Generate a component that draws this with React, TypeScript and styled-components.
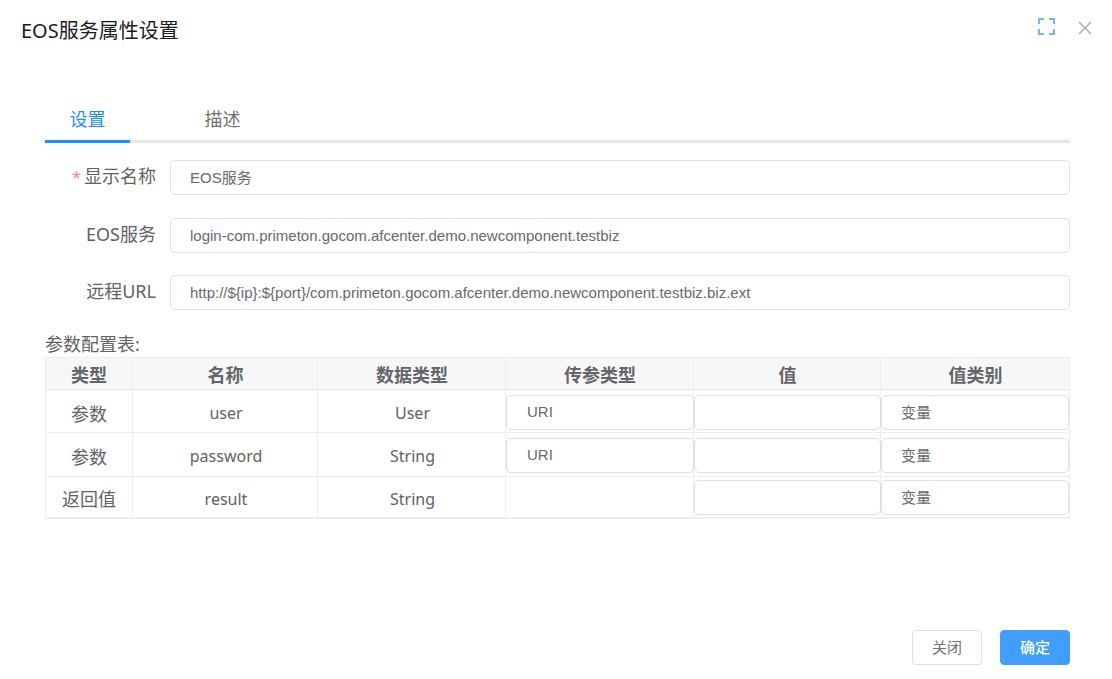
import React from "react";
import styled, { createGlobalStyle } from "styled-components";

const FONT = `"Noto Sans", "Noto Sans CJK SC", "Liberation Sans", sans-serif`;
const INPUT_FONT = `"Liberation Sans", "Noto Sans CJK SC", sans-serif`;

const Global = createGlobalStyle`
  html, body { margin: 0; padding: 0; background: #fff; }
  * { box-sizing: border-box; }
`;

const Dialog = styled.div`
  width: 1112px;
  height: 679px;
  background: #fff;
  font-family: ${FONT};
  display: flex;
  flex-direction: column;
  overflow: hidden;
`;
const Header = styled.header`
  height: 100px;
  display: flex;
  justify-content: space-between;
  align-items: flex-start;
  padding: 17px 20px 0 21px;
`;
const Title = styled.h1`
  margin: 0;
  font-size: 20px;
  line-height: 28px;
  font-weight: 400;
  color: #1b1b1b;
`;
const HeaderActions = styled.div`
  display: flex;
  align-items: flex-start;
  gap: 23px;
  margin-top: 1px;
`;
const Body = styled.main`
  flex: 1;
  padding: 0 42px 0 45px;
  display: flex;
  flex-direction: column;
`;
const TabBar = styled.div`
  display: flex;
  gap: 50px;
  height: 43px;
  border-bottom: 3px solid #e4e7ed;
`;
const Tab = styled.div<{ $active?: boolean }>`
  width: 85px;
  height: 43px;
  text-align: center;
  font-size: 18px;
  line-height: 38px;
  color: ${(p) => (p.$active ? "#1890ff" : "#707070")};
  border-bottom: 3px solid ${(p) => (p.$active ? "#1890ff" : "transparent")};
`;
const Form = styled.div`
  display: flex;
  flex-direction: column;
  margin-top: 17px;
`;
const FormRow = styled.div<{ $gap: number }>`
  display: flex;
  align-items: flex-start;
  height: 35px;
  margin-bottom: ${(p) => p.$gap}px;
`;
const Label = styled.label`
  width: 111px;
  text-align: right;
  font-size: 18px;
  line-height: 32px;
  color: #606266;
  flex: none;
`;
const Star = styled.span`
  color: #f78989;
  margin-right: 3px;
  font-size: 17px;
`;
const TextInput = styled.input<{ $latin?: boolean }>`
  flex: 1;
  min-width: 0;
  width: 100%;
  margin-left: 14px;
  height: 35px;
  border: 1px solid #dcdfe6;
  border-radius: 5px;
  padding: 0 19px ${(p) => (p.$latin ? 1 : 3)}px;
  font-family: ${INPUT_FONT};
  font-size: 15px;
  color: #66696d;
  outline: none;
  background: #fff;
`;
const TableTitle = styled.div`
  margin-top: 22px;
  font-size: 18px;
  line-height: 25px;
  color: #606266;
`;
const Table = styled.div`
  width: 1025px;
  border-top: 1px solid #ebeef5;
  border-left: 1px solid #ebeef5;
  border-right: 1px solid #ebeef5;
  border-bottom: 2px solid #ebeef5;
`;
const Row = styled.div<{ $head?: boolean; $h: number }>`
  display: grid;
  grid-template-columns: 87px 185px 188px 188px 187px 188px;
  height: ${(p) => p.$h}px;
  background: ${(p) => (p.$head ? "#f7f7f7" : "#fff")};
  border-bottom: ${(p) => (p.$head ? "2" : "1")}px solid #ebeef5;
  &:last-child { border-bottom: 0; }
`;
const HeadCell = styled.div`
  display: flex;
  align-items: center;
  justify-content: center;
  font-size: 18px;
  font-weight: 700;
  color: #63666a;
  border-right: 1px solid #ebeef5;
  &:not(:first-child) { padding-left: 1px; }
  &:last-child { border-right: 0; }
`;
const Cell = styled.div<{ $latin?: boolean }>`
  display: flex;
  align-items: center;
  justify-content: center;
  font-size: ${(p) => (p.$latin ? 16 : 18)}px;
  padding-left: ${(p) => (p.$latin ? 2 : 0)}px;
  padding-top: ${(p) => (p.$latin ? 3 : 2)}px;
  color: #606266;
  border-right: 1px solid #ebeef5;
`;
const InputCell = styled.div<{ $top: number }>`
  padding-top: ${(p) => p.$top}px;
  border-right: 1px solid #ebeef5;
  &:last-child { border-right: 0; }
`;
const CellInput = styled.input`
  display: block;
  width: calc(100% + 1px);
  height: 35px;
  border: 1px solid #dcdfe6;
  border-radius: 5px;
  padding: 0 19px 3px 20px;
  font-family: ${INPUT_FONT};
  font-size: 15px;
  color: #66696d;
  outline: none;
  background: #fff;
  ${InputCell}:last-child & { width: 100%; padding-left: 19px; }
`;
const Footer = styled.footer`
  height: 49px;
  padding: 0 42px 14px 0;
  display: flex;
  justify-content: flex-end;
  align-items: flex-start;
  gap: 18px;
`;
const Button = styled.button<{ $primary?: boolean }>`
  width: 70px;
  height: 35px;
  border-radius: 4px;
  border: 1px solid ${(p) => (p.$primary ? "#409eff" : "#dcdfe6")};
  background: ${(p) => (p.$primary ? "#409eff" : "#fff")};
  color: ${(p) => (p.$primary ? "#fff" : "#707275")};
  font-family: ${FONT};
  font-size: 15px;
  font-weight: ${(p) => (p.$primary ? 500 : 400)};
  padding: 0 0 2px;
`;

const IconFull = styled.svg`
  display: block;
`;
const IconClose = styled.svg`
  display: block;
  margin-top: 3px;
`;

const FullscreenIcon = () => (
  <IconFull width="17" height="17" viewBox="0 0 17 17" fill="none" stroke="#72b6fb" strokeWidth="2">
    <path d="M1 6V1h5M11 1h5v5M16 11v5h-5M6 16H1v-5" />
  </IconFull>
);
const CloseIcon = () => (
  <IconClose width="14" height="14" viewBox="0 0 14 14" fill="none" stroke="#a3a6ad" strokeWidth="1.3">
    <path d="M1 1l12 12M13 1L1 13" />
  </IconClose>
);

const rows = [
  { type: "参数", name: "user", dt: "User", pass: "URI", h: 42, top: 4 },
  { type: "参数", name: "password", dt: "String", pass: "URI", h: 44, top: 5 },
  { type: "返回值", name: "result", dt: "String", pass: null, h: 40, top: 3 },
];

export default function App() {
  return (
    <Dialog>
      <Global />
      <Header>
        <Title>EOS服务属性设置</Title>
        <HeaderActions>
          <FullscreenIcon />
          <CloseIcon />
        </HeaderActions>
      </Header>
      <Body>
        <TabBar>
          <Tab $active>设置</Tab>
          <Tab>描述</Tab>
        </TabBar>
        <Form>
          <FormRow $gap={23}>
            <Label><Star>*</Star>显示名称</Label>
            <TextInput readOnly value="EOS服务" />
          </FormRow>
          <FormRow $gap={22}>
            <Label>EOS服务</Label>
            <TextInput $latin readOnly value="login-com.primeton.gocom.afcenter.demo.newcomponent.testbiz" />
          </FormRow>
          <FormRow $gap={0}>
            <Label>远程URL</Label>
            <TextInput $latin readOnly value="http://${ip}:${port}/com.primeton.gocom.afcenter.demo.newcomponent.testbiz.biz.ext" />
          </FormRow>
        </Form>
        <TableTitle>参数配置表:</TableTitle>
        <Table>
          <Row $head $h={33}>
            {["类型", "名称", "数据类型", "传参类型", "值", "值类别"].map((h) => (
              <HeadCell key={h}>{h}</HeadCell>
            ))}
          </Row>
          {rows.map((r) => (
            <Row key={r.name} $h={r.h}>
              <Cell>{r.type}</Cell>
              <Cell $latin>{r.name}</Cell>
              <Cell $latin>{r.dt}</Cell>
              <InputCell $top={r.top}>{r.pass && <CellInput readOnly value={r.pass} />}</InputCell>
              <InputCell $top={r.top}><CellInput readOnly value="" /></InputCell>
              <InputCell $top={r.top}><CellInput readOnly value="变量" /></InputCell>
            </Row>
          ))}
        </Table>
      </Body>
      <Footer>
        <Button>关闭</Button>
        <Button $primary>确定</Button>
      </Footer>
    </Dialog>
  );
}
